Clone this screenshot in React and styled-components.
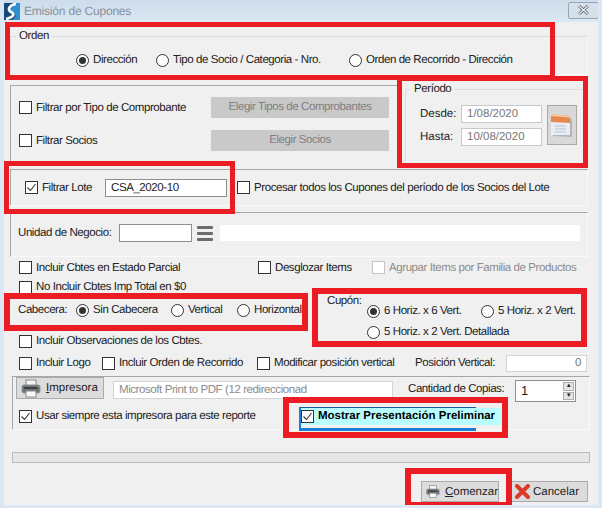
import styled, { createGlobalStyle } from 'styled-components'

const GlobalStyle = createGlobalStyle`
  html, body {
    margin: 0;
    padding: 0;
    background: #f0f0f0;
  }
  * {
    box-sizing: border-box;
  }
`

const Window = styled.div`
  position: relative;
  width: 602px;
  height: 508px;
  overflow: hidden;
  display: flex;
  flex-direction: column;
  background: #f0f0f0;
  border-left: 4px solid #dbe7f3;
  border-right: 4px solid #dbe7f3;
  border-bottom: 3px solid #dbe7f3;
  font-family: "Liberation Sans", Arial, sans-serif;
  font-size: 11.5px;
  letter-spacing: -0.42px;
  text-rendering: geometricPrecision;
  line-height: 16px;
  color: #222;
`

const TitleBar = styled.div`
  display: flex;
  align-items: center;
  height: 22px;
  margin: 0 -4px;
  padding: 0 3px;
  gap: 4px;
  background: linear-gradient(#ccdcea, #dce8f3);
  color: #87919b;
  font-size: 12px;
  letter-spacing: -0.2px;
`

const TitleText = styled.span`
  flex: 1;
`

const CloseButton = styled.div`
  display: flex;
  align-items: center;
  justify-content: center;
  width: 31px;
  height: 17px;
  margin-top: -2px;
  border: 1px solid #98a6b3;
  border-radius: 2px;
  background: #d6e0ea;
`

const Body = styled.div`
  width: 584px;
  padding-left: 6px;
`

const Group = styled.fieldset`
  margin: 0;
  min-width: 0;
  padding: 0;
  border: 1px solid #dcdcdc;
  border-right-color: #fafafa;
  border-bottom-color: #fafafa;
`

const Legend = styled.legend`
  margin-left: 5px;
  padding: 0 3px;
  line-height: 16px;
`

const OrderGroup = styled(Group)`
  height: 47px;
  margin-top: 6px;
`

const OrderOptions = styled.div`
  padding: 6px 0 0 65px;
  display: grid;
  grid-template-columns: 80px 193px auto;
  grid-auto-rows: 20px;
  align-items: center;
`

const MidRow = styled.div`
  display: flex;
  justify-content: space-between;
  margin-top: 6px;
  height: 81px;
`

const Panel = styled.div`
  border-top: 1px solid #a6a6a6;
  border-left: 1px solid #a6a6a6;
  border-right: 1px solid #fafafa;
  border-bottom: 1px solid #fafafa;
`

const FilterPanel = styled(Panel)`
  width: 390px;
  height: 76px;
  margin-top: 4px;
  padding: 11px 0 0 8px;
  border-bottom: none;
  border-right: none;
  display: grid;
  grid-template-columns: 192px 178px;
  grid-auto-rows: 21px;
  row-gap: 12px;
  align-items: center;
`

const PeriodGroup = styled(Group)`
  width: 183px;
`

const PeriodGrid = styled.div`
  padding: 8px 0 0 14px;
  display: grid;
  grid-template-columns: 41px 81px 35px;
  grid-template-rows: 18px 18px;
  row-gap: 5px;
  align-items: center;
  letter-spacing: 0;
`

const CalendarButton = styled.div`
  grid-column: 3;
  grid-row: 1 / span 2;
  align-self: start;
  width: 30px;
  height: 40px;
  margin-left: 5px;
  display: flex;
  align-items: center;
  justify-content: center;
  background: #d8d8d8;
  border: 1px solid #a8a8a8;
`

const DisabledButton = styled.div`
  height: 21px;
  line-height: 21px;
  text-align: center;
  background: #c9c9c9;
  color: #7f7f7f;
`

const LotePanel = styled(Panel)`
  height: 37px;
  margin-top: 7px;
  padding-left: 14px;
  display: flex;
  align-items: center;
`

const LoteCheck = styled.div`
  width: 80px;
`

const ProcessCheck = styled.div`
  margin-left: 10px;
`

const UnitPanel = styled(Panel)`
  height: 45px;
  margin-top: 6px;
  padding: 0 7px 3px 7px;
  display: flex;
  align-items: center;
`

const UnitLabel = styled.span`
  width: 101px;
  white-space: nowrap;
`

const Input = styled.div`
  display: flex;
  align-items: center;
  height: ${p => p.$h || 18}px;
  width: ${p => (p.$w ? `${p.$w}px` : 'auto')};
  padding: 0 ${p => p.$pad || 5}px;
  background: #fff;
  border: 1px solid ${p => p.$border || '#a0a0a0'};
  color: ${p => p.$color || '#222'};
  justify-content: ${p => (p.$right ? 'flex-end' : 'flex-start')};
  white-space: nowrap;
  overflow: hidden;
`

const MenuIcon = styled.div`
  display: flex;
  flex-direction: column;
  gap: 3px;
  width: 16px;
  margin: 0 7px 0 5px;
  span {
    height: 3px;
    border-radius: 1px;
    background: #6d6d6d;
  }
`

const WideField = styled.div`
  flex: 1;
  height: 16px;
  background: #fff;
`

const OptionRow = styled.div`
  display: grid;
  grid-template-columns: ${p => p.$cols};
  height: ${p => p.$h || 20}px;
  align-items: center;
  padding-left: 9px;
  margin-top: ${p => p.$top || 0}px;
`

const SplitRow = styled.div`
  display: flex;
`

const LeftColumn = styled.div`
  width: 302px;
`

const HeaderRow = styled.div`
  display: grid;
  grid-template-columns: 58px 95px 66px auto;
  align-items: center;
  height: 26px;
  padding-left: 8px;
`

const CouponPanel = styled.div`
  display: flex;
  padding: 16px 0 0 15px;
`

const CouponLabel = styled.span`
  width: 40px;
`

const CouponGrid = styled.div`
  display: grid;
  grid-template-columns: 114px auto;
  grid-auto-rows: 20px;
  row-gap: 1px;
  align-items: center;
  margin-top: 8px;
`

const WideCell = styled.div`
  grid-column: 1 / span 2;
`

const PrinterPanel = styled(Panel)`
  width: 578px;
  height: 54px;
  margin: 3px 0 0 2px;
`

const PrinterTop = styled.div`
  display: flex;
  align-items: flex-start;
  padding-left: 3px;
  height: 28px;
`

const ActionButton = styled.div`
  display: flex;
  align-items: center;
  gap: ${p => p.$gap || 5}px;
  width: ${p => p.$w}px;
  height: ${p => p.$h || 21}px;
  padding-left: ${p => p.$pad || 4}px;
  background: #dcdcdc;
  border: 1px solid #ababab;
  white-space: nowrap;
  letter-spacing: 0;
  u {
    text-decoration: underline;
  }
`

const PrinterInput = styled(Input)`
  margin: 4px 15px 0 9px;
`

const CopiesLabel = styled.span`
  margin-top: 4px;
  width: 107px;
  white-space: nowrap;
`

const Spinner = styled.div`
  display: flex;
  justify-content: space-between;
  align-items: center;
  width: 61px;
  height: 22px;
  margin-top: 3px;
  padding: 0 1px 0 5px;
  background: #fff;
  border: 1px solid #8e8e8e;
  font-size: 13px;
`

const SpinnerArrows = styled.div`
  display: flex;
  flex-direction: column;
  width: 11px;
  height: 18px;
  gap: 1px;
`

const SpinnerArrow = styled.div`
  flex: 1;
  display: flex;
  align-items: center;
  justify-content: center;
  background: #e4e4e4;
  border: 1px solid #b0b0b0;
  font-size: 6px;
  line-height: 6px;
`

const PrinterBottom = styled.div`
  display: flex;
  align-items: center;
  padding-left: 6px;
  height: 22px;
`

const KeepPrinter = styled.div`
  width: 280px;
`

const PreviewWrap = styled.div`
  position: relative;
  width: 202px;
  height: 17px;
  padding-left: 2px;
  display: flex;
  align-items: center;
  background: #b9feff;
  font-weight: 700;
  letter-spacing: 0;
  color: #000;
  &::before {
    content: "";
    position: absolute;
    left: 0;
    top: -1px;
    width: 175px;
    height: 20px;
    border-top: 1px solid #1b5d96;
    border-left: 2px solid #1b7fd6;
    border-bottom: 3px solid #1b7fd6;
  }
`

const PreviewCheck = styled.div`
  position: relative;
`

const ProgressBar = styled.div`
  width: 578px;
  height: 11px;
  margin: 22px 0 0 2px;
  background: #e6e6e6;
  border: 1px solid #bcbcbc;
`

const Footer = styled.div`
  display: flex;
  justify-content: flex-end;
  gap: 12px;
  margin-top: 18px;
`

const CheckLabel = styled.label`
  display: flex;
  align-items: center;
  gap: 4px;
  white-space: nowrap;
  color: ${p => (p.$disabled ? '#8c8c8c' : 'inherit')};
`

const CheckBox = styled.span`
  display: flex;
  align-items: center;
  justify-content: center;
  flex: none;
  width: 13px;
  height: 13px;
  background: #fff;
  border: 1px solid ${p => (p.$disabled ? '#c4c4c4' : '#333')};
`

const RadioLabel = styled.label`
  display: flex;
  align-items: center;
  gap: 4px;
  white-space: nowrap;
`

const RadioDot = styled.span`
  display: flex;
  align-items: center;
  justify-content: center;
  flex: none;
  width: 13px;
  height: 13px;
  border-radius: 50%;
  background: #fff;
  border: 1px solid #333;
  &::after {
    content: "";
    display: ${p => (p.$on ? 'block' : 'none')};
    width: 7px;
    height: 7px;
    border-radius: 50%;
    background: #333;
  }
`

// the red marks drawn on top of the capture
const Highlight = styled.div`
  position: absolute;
  left: ${p => p.$x - 4}px;
  top: ${p => p.$y}px;
  width: ${p => p.$w}px;
  height: ${p => p.$h}px;
  border: ${p => p.$t || 5}px solid #ec1c24;
  pointer-events: none;
`

const Tick = () => (
  <svg width="11" height="11" viewBox="0 0 11 11">
    <path d="M1.5 5.5 L4.5 8.5 L9.5 2" fill="none" stroke="#333" strokeWidth="1.1" />
  </svg>
)

const Check = ({ on, disabled, children }) => (
  <CheckLabel $disabled={disabled}>
    <CheckBox $disabled={disabled}>{on && <Tick />}</CheckBox>
    {children}
  </CheckLabel>
)

const Radio = ({ on, children }) => (
  <RadioLabel>
    <RadioDot $on={on} />
    {children}
  </RadioLabel>
)

const Logo = () => (
  <svg width="17" height="17" viewBox="0 0 17 17">
    <rect x="0" y="0" width="17" height="17" rx="2" fill="#17487c" />
    <path d="M11 0 H17 V17 H9 C14 14 13 10 9 9 C5 8 5 3 11 0 Z" fill="#2f8fd0" />
    <path d="M13 1 C6 2 4 7 8 9 C12 11 11 14 3 16" fill="none" stroke="#fff" strokeWidth="2.6" />
  </svg>
)

const CloseIcon = () => (
  <svg width="13" height="10" viewBox="0 0 13 10">
    <path d="M2 1 L11 9 M11 1 L2 9" stroke="#5f6870" strokeWidth="3" />
    <path d="M2 1 L11 9 M11 1 L2 9" stroke="#eef2f6" strokeWidth="1.2" />
  </svg>
)

const CalendarIcon = () => (
  <svg width="24" height="27" viewBox="0 0 24 27">
    <path d="M3 4 L22 7 V25 L3 24 Z" fill="#b4b4b4" />
    <path d="M1 3 L20 5 V23 L1 23 Z" fill="#e9eef5" />
    <path d="M1 2 L20 4 V11 L1 10 Z" fill="#e68a4a" />
    <path d="M1 2 L20 4 V5.5 L1 4 Z" fill="#f6cba6" />
    <path d="M5 14 H16 M5 17 H16 M5 20 H16" stroke="#c4d0e0" strokeWidth="1.4" />
  </svg>
)

const PrinterIcon = () => (
  <svg width="20" height="19" viewBox="0 0 20 19">
    <rect x="5" y="1" width="10" height="6" fill="#f4f4f4" stroke="#8a8a8a" />
    <rect x="1" y="6" width="18" height="8" rx="2" fill="#6e7378" stroke="#8d9195" />
    <rect x="3" y="8" width="14" height="2" fill="#3e4246" />
    <rect x="16" y="7" width="2" height="1.5" fill="#4ea24e" />
    <rect x="5" y="12" width="10" height="6" fill="#f7f7f7" stroke="#8a8a8a" />
  </svg>
)

const CancelIcon = () => (
  <svg width="15" height="15" viewBox="0 0 15 15">
    <path d="M2 2 L13 13 M13 2 L2 13" stroke="#dd3a2a" strokeWidth="4" strokeLinecap="round" />
  </svg>
)

const App = () => {
  return (
    <>
      <GlobalStyle />
      <Window>
        <TitleBar>
          <Logo />
          <TitleText>Emisión de Cupones</TitleText>
          <CloseButton><CloseIcon /></CloseButton>
        </TitleBar>
        <Body>
          <OrderGroup>
            <Legend>Orden</Legend>
            <OrderOptions>
              <Radio on>Dirección</Radio>
              <Radio>Tipo de Socio / Categoria - Nro.</Radio>
              <Radio>Orden de Recorrido - Dirección</Radio>
            </OrderOptions>
          </OrderGroup>

          <MidRow>
            <FilterPanel>
              <Check>Filtrar por Tipo de Comprobante</Check>
              <DisabledButton>Elegir Tipos de Comprobantes</DisabledButton>
              <Check>Filtrar Socios</Check>
              <DisabledButton>Elegir Socios</DisabledButton>
            </FilterPanel>
            <PeriodGroup>
              <Legend>Período</Legend>
              <PeriodGrid>
                <span>Desde:</span>
                <Input $w={81} $border="#c8c8c8" $color="#777">1/08/2020</Input>
                <CalendarButton><CalendarIcon /></CalendarButton>
                <span>Hasta:</span>
                <Input $w={81} $border="#c8c8c8" $color="#777">10/08/2020</Input>
              </PeriodGrid>
            </PeriodGroup>
          </MidRow>

          <LotePanel>
            <LoteCheck><Check on>Filtrar Lote</Check></LoteCheck>
            <Input $w={122} $border="#8e8e8e">CSA_2020-10</Input>
            <ProcessCheck>
              <Check>Procesar todos los Cupones del período de los Socios del Lote</Check>
            </ProcessCheck>
          </LotePanel>

          <UnitPanel>
            <UnitLabel>Unidad de Negocio:</UnitLabel>
            <Input $w={73} $border="#8e8e8e" />
            <MenuIcon><span /><span /><span /></MenuIcon>
            <WideField />
          </UnitPanel>

          <OptionRow $cols="239px 114px auto" $top={1} $h={19}>
            <Check>Incluir Cbtes en Estado Parcial</Check>
            <Check>Desglozar Items</Check>
            <Check disabled>Agrupar Items por Familia de Productos</Check>
          </OptionRow>

          <SplitRow>
            <LeftColumn>
              <OptionRow $cols="auto">
                <Check>No Incluir Cbtes Imp Total en $0</Check>
              </OptionRow>
              <HeaderRow>
                <span>Cabecera:</span>
                <Radio on>Sin Cabecera</Radio>
                <Radio>Vertical</Radio>
                <Radio>Horizontal</Radio>
              </HeaderRow>
              <OptionRow $cols="auto" $top={8}>
                <Check>Incluir Observaciones de los Cbtes.</Check>
              </OptionRow>
            </LeftColumn>
            <CouponPanel>
              <CouponLabel>Cupón:</CouponLabel>
              <CouponGrid>
                <Radio on>6 Horiz. x 6 Vert.</Radio>
                <Radio>5 Horiz. x 2 Vert.</Radio>
                <WideCell><Radio>5 Horiz. x 2 Vert. Detallada</Radio></WideCell>
              </CouponGrid>
            </CouponPanel>
          </SplitRow>

          <OptionRow $cols="83px 155px 158px 91px 81px" $top={2}>
            <Check>Incluir Logo</Check>
            <Check>Incluir Orden de Recorrido</Check>
            <Check>Modificar posición vertical</Check>
            <span>Posición Vertical:</span>
            <Input $w={81} $h={17} $border="#d4d4d4" $color="#777" $right>0</Input>
          </OptionRow>

          <PrinterPanel>
            <PrinterTop>
              <ActionButton $w={88} $h={22}>
                <PrinterIcon />
                <span><u>I</u>mpresora</span>
              </ActionButton>
              <PrinterInput $w={280} $border="#d4d4d4" $color="#8c8c8c">
                Microsoft Print to PDF (12 redireccionad
              </PrinterInput>
              <CopiesLabel>Cantidad de Copias:</CopiesLabel>
              <Spinner>
                1
                <SpinnerArrows>
                  <SpinnerArrow>▲</SpinnerArrow>
                  <SpinnerArrow>▼</SpinnerArrow>
                </SpinnerArrows>
              </Spinner>
            </PrinterTop>
            <PrinterBottom>
              <KeepPrinter>
                <Check on>Usar siempre esta impresora para este reporte</Check>
              </KeepPrinter>
              <PreviewWrap>
                <PreviewCheck><Check on>Mostrar Presentación Preliminar</Check></PreviewCheck>
              </PreviewWrap>
            </PrinterBottom>
          </PrinterPanel>

          <ProgressBar />

          <Footer>
            <ActionButton $w={78}>
              <PrinterIcon />
              <span><u>C</u>omenzar</span>
            </ActionButton>
            <ActionButton $w={77} $pad={3} $gap={3}>
              <CancelIcon />
              Cancelar
            </ActionButton>
          </Footer>
        </Body>

        <Highlight $x={5} $y={22} $w={550} $h={58} />
        <Highlight $x={397} $y={76} $w={191} $h={92} />
        <Highlight $x={4} $y={161} $w={231} $h={53} />
        <Highlight $x={4} $y={293} $w={304} $h={38} $t={6} />
        <Highlight $x={312} $y={288} $w={275} $h={59} $t={6} />
        <Highlight $x={283} $y={397} $w={225} $h={41} $t={6} />
        <Highlight $x={405} $y={468} $w={107} $h={40} $t={6} />
      </Window>
    </>
  )
}

export default App
